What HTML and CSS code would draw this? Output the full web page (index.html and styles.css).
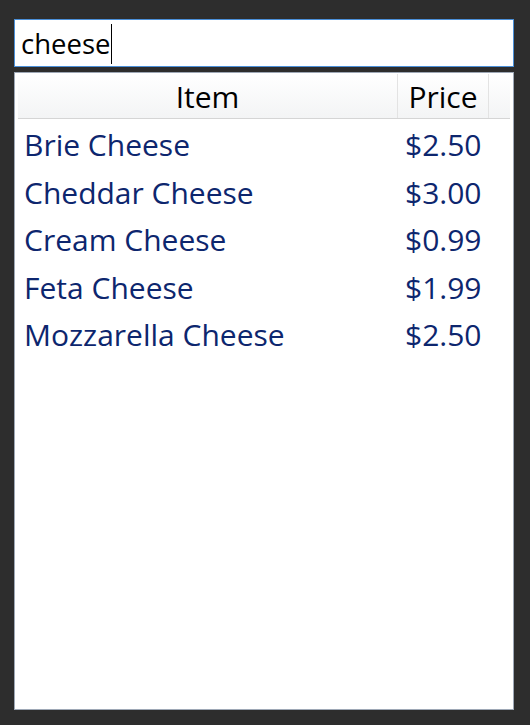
FILE: index.html
```html
<!DOCTYPE html>
<html>
<head>
<meta charset="utf-8">
<link rel="stylesheet" href="styles.css">
</head>
<body>
<div class="window">
  <div class="search">
    <span class="search-text">cheese</span><span class="caret"></span>
  </div>
  <div class="list">
    <div class="header">
      <div class="hcell hcell-item">Item</div>
      <div class="hcell hcell-price">Price</div>
      <div class="hcell hcell-fill"></div>
    </div>
    <div class="rows">
      <div class="row"><span class="c-item">Brie Cheese</span><span class="c-price">$2.50</span></div>
      <div class="row"><span class="c-item">Cheddar Cheese</span><span class="c-price">$3.00</span></div>
      <div class="row"><span class="c-item">Cream Cheese</span><span class="c-price">$0.99</span></div>
      <div class="row"><span class="c-item">Feta Cheese</span><span class="c-price">$1.99</span></div>
      <div class="row"><span class="c-item">Mozzarella Cheese</span><span class="c-price">$2.50</span></div>
    </div>
  </div>
</div>
</body>
</html>
```
FILE: styles.css
```css
html, body {
  margin: 0;
  padding: 0;
  background: #2d2d2d;
}
body {
  font-family: "Open Sans", "Noto Sans", sans-serif;
}
.window {
  padding: 19px 16px 15px 14px;
  display: flex;
  flex-direction: column;
  gap: 5px;
}
.search {
  box-sizing: border-box;
  height: 48px;
  background: #ffffff;
  border: 1px solid #4b90d9;
  display: flex;
  align-items: center;
  padding-left: 6px;
  padding-top: 1px;
  font-size: 27.5px;
  color: #000000;
}
.search-text {
  line-height: 38px;
}
.caret {
  display: inline-block;
  width: 1px;
  height: 40px;
  background: #000000;
  margin-left: 1px;
}
.list {
  box-sizing: border-box;
  height: 638px;
  background: #ffffff;
  border: 1px solid #9ea8b6;
  padding: 1px 3px 0 3px;
  display: flex;
  flex-direction: column;
}
.header {
  display: flex;
  height: 45px;
  box-sizing: border-box;
  border-bottom: 1px solid #d5d5d5;
  background: linear-gradient(#ffffff, #f3f4f5);
  font-size: 30px;
  color: #000000;
}
.hcell {
  display: flex;
  align-items: center;
  justify-content: center;
  box-sizing: border-box;
}
.hcell-item {
  width: 380px;
  border-right: 1px solid #e3e3e3;
}
.hcell-price {
  width: 91px;
  border-right: 1px solid #e3e3e3;
}
.hcell-fill {
  flex: 1;
}
.rows {
  display: flex;
  flex-direction: column;
  padding-top: 2px;
}
.row {
  display: flex;
  height: 47.5px;
  align-items: center;
  font-size: 30px;
  color: #0d266e;
}
.c-item {
  width: 380px;
  padding-left: 6px;
  box-sizing: border-box;
}
.c-price {
  padding-left: 7px;
}
```
